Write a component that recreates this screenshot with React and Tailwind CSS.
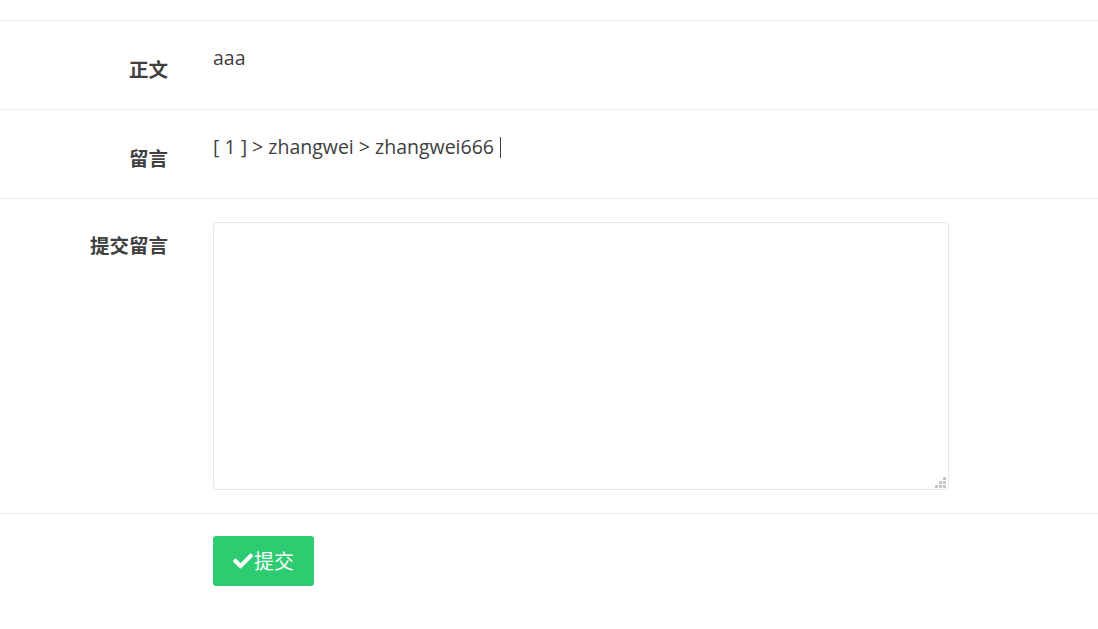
import React from 'react';

function Row({ label, children, labelClass = 'pt-[37px]', className = '' }) {
  return (
    <div className={`flex border-b border-[#e9ebf2] ${className}`}>
      <div className={`w-[168px] shrink-0 text-right text-[19.5px] font-bold text-[#404040] leading-[24px] ${labelClass}`}>
        {label}
      </div>
      <div className="ml-[45px] flex-1 min-w-0">{children}</div>
    </div>
  );
}

function Grip() {
  const dots = [[8, 0], [4, 4], [8, 4], [0, 8], [4, 8], [8, 8]];
  return (
    <div className="absolute right-[3px] bottom-[2px] w-[11px] h-[11px] pointer-events-none">
      {dots.map(([x, y], i) => (
        <span
          key={i}
          className="absolute w-[3px] h-[3px] bg-[#c4c4c4]"
          style={{ left: x, top: y }}
        />
      ))}
    </div>
  );
}

export default function App() {
  return (
    <div
      className="w-[1098px] h-[629px] bg-white overflow-hidden"
      style={{ fontFamily: '"Open Sans", "Noto Sans CJK SC", sans-serif' }}
    >
      <div className="h-[21px] border-b border-[#e9ebf2]" />
      <Row label="正文" className="h-[89px]">
        <div className="pt-[24px] text-[19.5px] leading-[26px] text-[#404040]">aaa</div>
      </Row>
      <Row label="留言" className="h-[89px]">
        <div className="pt-[24px] text-[19.5px] leading-[26px] text-[#404040] flex items-center">
          <span>[ 1 ] &gt; zhangwei &gt; zhangwei666</span>
          <span className="ml-[6px] inline-block w-px h-[21px] bg-[#404040]" />
        </div>
      </Row>
      <Row label="提交留言" labelClass="pt-[35px]" className="h-[315px]">
        <div className="pt-[23px]">
          <div className="relative w-[736px] h-[268px]">
            <textarea className="block w-full h-full resize-none border border-[#e6e8ee] rounded-[3px] outline-none" />
            <Grip />
          </div>
        </div>
      </Row>
      <div className="flex">
        <div className="w-[168px] shrink-0" />
        <div className="ml-[45px] pt-[22px]">
          <button className="flex items-center justify-center w-[101px] h-[50px] rounded-[3px] bg-[#2ecc71] text-white text-[20px] leading-none">
            <svg width="20" height="20" viewBox="0 0 512 512" className="mr-[1px]">
              <path
                fill="white"
                d="M173.9 439.4L7.5 273c-10-10-10-26.2 0-36.2l36.2-36.2c10-10 26.2-10 36.2 0L192 312.7 432.1 72.6c10-10 26.2-10 36.2 0l36.2 36.2c10 10 10 26.2 0 36.2L210.1 439.4c-10 10-26.2 10-36.2 0z"
              />
            </svg>
            <span style={{ fontFamily: '"Noto Sans CJK SC", sans-serif' }}>提交</span>
          </button>
        </div>
      </div>
    </div>
  );
}
